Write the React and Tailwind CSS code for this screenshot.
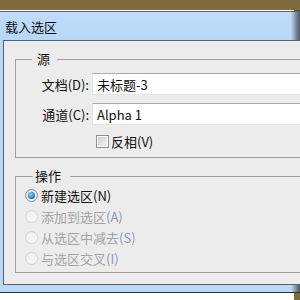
import React from "react";

const FONT = "font-['Noto_Sans_CJK_SC','Microsoft_YaHei',sans-serif]";

function Radio({ checked, disabled, label, key2 }) {
  return (
    <div className="flex h-[21px] items-center">
      {checked ? (
        <div className="flex h-[13px] w-[13px] items-center justify-center rounded-full border border-[#8f9294] bg-[linear-gradient(135deg,#d8d8d8,#f8f8f8)]">
          <div className="h-[7px] w-[7px] rounded-full bg-[radial-gradient(circle_at_40%_35%,#8fdcff,#2a86d0_55%,#134f8c)]" />
        </div>
      ) : (
        <div className="h-[13px] w-[13px] rounded-full border border-[#d4d4d4] bg-[linear-gradient(135deg,#ededed,#f8f8f8)]" />
      )}
      <span
        className={
          "ml-[3px] text-[13px] leading-none " +
          (disabled ? "text-[#a4a4a4]" : "text-[#111]")
        }
      >
        {label}
        <span className={disabled ? "text-[#8d98b0]" : "text-[#111]"}>{key2}</span>
      </span>
    </div>
  );
}

export default function App() {
  return (
    <div className={"flex h-[300px] w-[300px] flex-col overflow-hidden bg-white " + FONT}>
      <div className="h-[10px] shrink-0 bg-[#7f6b3d]" />
      <div className="flex h-px shrink-0">
        <div className="w-[294px] bg-white" />
        <div className="flex-1 bg-[#5f5234]" />
      </div>
      <div className="h-px shrink-0 bg-[#56616e]" />
      {/* title bar */}
      <div className="flex h-[28px] shrink-0 bg-[linear-gradient(180deg,#c0ddf9,#b6d7f8)]">
        <div className="flex flex-1 items-center pl-[5px] text-[13px] leading-none text-[#111]">
          载入选区
        </div>
        <div className="w-[9px] bg-[linear-gradient(90deg,#b9d9f7,#6d7884_70%,#525b64)]" />
      </div>
      {/* body */}
      <div className="flex h-[245px] shrink-0">
        <div className="w-[3px] bg-[#b9d9f7]" />
        <div className="flex flex-1 flex-col overflow-hidden border-y border-l border-[#56616e] bg-[#ececec]">
          {/* group 1 */}
          <fieldset className="ml-[11px] mt-[10px] w-[320px] shrink-0 border border-[#a0a0a0] p-0 pb-[9px]">
            <legend className="ml-[16px] pl-[5px] pr-[7px] text-[13px] leading-[16px] text-[#111]">
              源
            </legend>
            <div className="mt-[6px] flex h-[22px] items-center">
              <div className="w-[73px] text-right text-[13px] leading-none text-[#111]">文档(D):</div>
              <div className="ml-[3px] flex h-[22px] flex-1 items-center border border-[#e2e3ea] border-t-[#abadb3] bg-white pl-[4px] text-[13px] leading-none text-[#111]">
                未标题-3
              </div>
            </div>
            <div className="mt-[8px] flex h-[22px] items-center">
              <div className="w-[73px] text-right text-[13px] leading-none text-[#111]">通道(C):</div>
              <div className="ml-[3px] flex h-[22px] flex-1 items-center border border-[#e2e3ea] border-t-[#abadb3] bg-white pl-[4px] text-[13px] leading-none text-[#111]">
                Alpha 1
              </div>
            </div>
            <div className="ml-[80px] mt-[10px] flex h-[13px] items-center">
              <div className="flex h-[13px] w-[13px] items-center justify-center border border-[#8f8f8f] bg-white">
                <div className="h-[9px] w-[9px] bg-[linear-gradient(135deg,#cfcfcf,#f2f2f2)]" />
              </div>
              <span className="ml-[2px] text-[13px] leading-none text-[#111]">反相(V)</span>
            </div>
          </fieldset>
          {/* group 2 */}
          <fieldset className="ml-[11px] mt-[10px] w-[320px] shrink-0 border border-[#a0a0a0] p-0 pb-[3px] pl-[9px] pt-[1px]">
            <legend className="ml-[8px] pl-[2px] pr-[9px] text-[13px] leading-[16px] text-[#111]">
              操作
            </legend>
            <Radio checked label="新建选区" key2="(N)" />
            <Radio disabled label="添加到选区" key2="(A)" />
            <Radio disabled label="从选区中减去" key2="(S)" />
            <Radio disabled label="与选区交叉" key2="(I)" />
          </fieldset>
        </div>
      </div>
      <div className="flex h-[7px] shrink-0 bg-[#b9d9f7]">
        <div className="flex-1" />
        <div className="w-[9px] bg-[linear-gradient(90deg,#b9d9f7,#6d7884_70%,#525b64)]" />
      </div>
      <div className="h-px shrink-0 bg-[#2a2f35]" />
      <div className="flex flex-1">
        <div className="flex-1 bg-white" />
        <div className="w-[6px] bg-[#7f6b3d]" />
      </div>
    </div>
  );
}
